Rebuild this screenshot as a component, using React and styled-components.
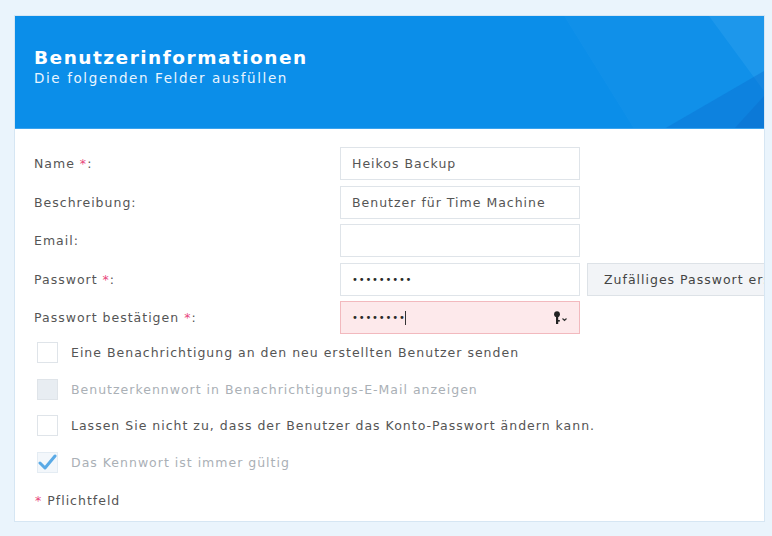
import React from "react";
import styled, { createGlobalStyle } from "styled-components";

const GlobalStyle = createGlobalStyle`
  body {
    margin: 0;
    background: #eaf4fc;
    font-family: "DejaVu Sans", Verdana, sans-serif;
  }
`;

const Page = styled.div`
  padding: 15px 7px 14px 14px;
`;

const Panel = styled.div`
  width: 751px;
  height: 507px;
  background: #fff;
  border: 1px solid #d6e6f3;
  box-sizing: border-box;
  overflow: hidden;
`;

const Header = styled.div`
  position: relative;
  height: 113px;
  background: #0b8ee9;
  color: #fff;
  padding: 31px 20px 0 19px;
  box-sizing: border-box;
  overflow: hidden;
  border-bottom: 1px solid #3aa3ee;

  & > svg {
    position: absolute;
    right: 0;
    top: 0;
  }
`;

const Title = styled.h1`
  position: relative;
  margin: 0;
  font-size: 18.5px;
  font-weight: 700;
  line-height: 22px;
  letter-spacing: 1.5px;
`;

const Subtitle = styled.p`
  position: relative;
  margin: 0;
  font-size: 13.5px;
  line-height: 18px;
  letter-spacing: 1.6px;
  color: #e9f5ff;
`;

const Body = styled.div`
  padding: 18px 0 0 19px;
  font-size: 12.5px;
  letter-spacing: 1px;
`;

const Fields = styled.div`
  display: flex;
  flex-direction: column;
  gap: 5.5px;
`;

const Row = styled.div`
  display: grid;
  grid-template-columns: 299px 240px max-content;
  column-gap: 7px;
  align-items: center;
  height: 33px;
`;

const Label = styled.label`
  color: #555;
`;

const Star = styled.span`
  color: #e8467c;
`;

const Input = styled.div`
  height: 33px;
  box-sizing: border-box;
  border: 1px solid ${(p) => (p.$error ? "#f2b9be" : "#dfe4e9")};
  background: ${(p) => (p.$error ? "#fde9eb" : "#fff")};
  display: flex;
  align-items: center;
  padding: 0 10px 0 11px;
  color: #555;
  gap: 4px;
`;

const Dots = styled.span`
  font-size: 10px;
  letter-spacing: 0.8px;
  color: #2a2a2a;
  flex: 1;
`;

const Caret = styled.span`
  display: inline-block;
  width: 1px;
  height: 14px;
  background: #333;
  vertical-align: middle;
  margin-left: -1px;
`;

const Button = styled.button`
  height: 33px;
  width: 240px;
  text-align: left;
  padding: 0 16px;
  border: 1px solid #dde2e7;
  background: #f2f4f7;
  font-family: inherit;
  font-size: 12.5px;
  letter-spacing: 1px;
  color: #444;
  white-space: nowrap;
`;

const Checks = styled.div`
  margin-top: 8px;
  padding-left: 3px;
  display: flex;
  flex-direction: column;
  gap: 15.5px;
`;

const CheckRow = styled.div`
  display: flex;
  align-items: center;
  gap: 13px;
  color: ${(p) => (p.$disabled ? "#aab0b6" : "#555")};
`;

const Box = styled.span`
  width: 21px;
  height: 21px;
  box-sizing: border-box;
  border: 1px solid ${(p) => (p.$checked ? "#e4ecf3" : "#dfe4e9")};
  background: ${(p) => (p.$checked ? "#f3f7fb" : p.$disabled ? "#e8edf2" : "#fff")};
  display: flex;
  align-items: center;
  justify-content: center;
`;

const Note = styled.div`
  margin-top: 20px;
  padding-left: 1px;
  color: #555;
`;

const KeyIcon = () => (
  <svg width="16" height="14" viewBox="0 0 16 14">
    <circle cx="4" cy="3.2" r="2.9" fill="#222" />
    <rect x="3" y="4" width="2.2" height="9" fill="#222" />
    <rect x="5" y="9" width="1.8" height="1.6" fill="#222" />
    <path d="M9.5 7.5 L11.5 9.5 L13.5 7.5" fill="none" stroke="#333" strokeWidth="1.2" />
  </svg>
);

const CheckMark = () => (
  <svg width="19" height="17" viewBox="0 0 19 17">
    <path d="M2 9 L7 14 L17 2" fill="none" stroke="#5aaae6" strokeWidth="3" strokeLinecap="round" strokeLinejoin="round" />
  </svg>
);

const HeaderDecor = () => (
  <svg width="260" height="113" viewBox="0 0 260 113">
    <polygon points="60,0 260,0 260,113 130,113" fill="#ffffff" opacity="0.025" />
    <polygon points="205,0 260,0 260,75" fill="#7fd0ff" opacity="0.12" />
    <polygon points="160,113 260,55 260,113" fill="#0a6fcf" opacity="0.4" />
    <polygon points="230,113 260,80 260,113" fill="#0a5fbf" opacity="0.25" />
  </svg>
);

const fields = [
  { label: "Name", required: true, value: "Heikos Backup" },
  { label: "Beschreibung", value: "Benutzer für Time Machine" },
  { label: "Email", value: "" },
  { label: "Passwort", required: true, password: 9, button: "Zufälliges Passwort erstellen" },
  { label: "Passwort bestätigen", required: true, password: 8, error: true },
];

const checks = [
  { text: "Eine Benachrichtigung an den neu erstellten Benutzer senden" },
  { text: "Benutzerkennwort in Benachrichtigungs-E-Mail anzeigen", disabled: true },
  { text: "Lassen Sie nicht zu, dass der Benutzer das Konto-Passwort ändern kann." },
  { text: "Das Kennwort ist immer gültig", disabled: true, checked: true },
];

export default function App() {
  return (
    <Page>
      <GlobalStyle />
      <Panel>
        <Header>
          <HeaderDecor />
          <Title>Benutzerinformationen</Title>
          <Subtitle>Die folgenden Felder ausfüllen</Subtitle>
        </Header>
        <Body>
          <Fields>
            {fields.map((f) => (
              <Row key={f.label}>
                <Label>
                  {f.label}
                  {f.required && <Star> *</Star>}:
                </Label>
                <Input $error={f.error}>
                  {f.password ? (
                    <Dots>
                      {"•".repeat(f.password)}
                      {f.error && <Caret />}
                    </Dots>
                  ) : (
                    f.value
                  )}
                  {f.error && <KeyIcon />}
                </Input>
                {f.button && <Button>{f.button}</Button>}
              </Row>
            ))}
          </Fields>
          <Checks>
            {checks.map((c) => (
              <CheckRow key={c.text} $disabled={c.disabled}>
                <Box $disabled={c.disabled} $checked={c.checked}>
                  {c.checked && <CheckMark />}
                </Box>
                {c.text}
              </CheckRow>
            ))}
          </Checks>
          <Note>
            <Star>*</Star> Pflichtfeld
          </Note>
        </Body>
      </Panel>
    </Page>
  );
}
